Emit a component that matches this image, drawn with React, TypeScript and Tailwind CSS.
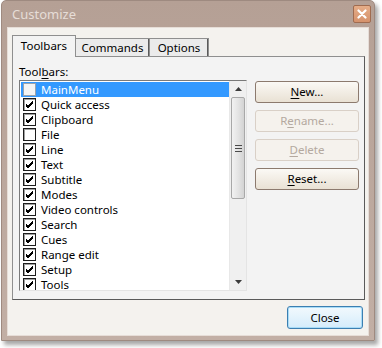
import { Fragment } from 'react';

const rows: [string, boolean][] = [
  ['MainMenu', false],
  ['Quick access', true],
  ['Clipboard', true],
  ['File', false],
  ['Line', true],
  ['Text', true],
  ['Subtitle', true],
  ['Modes', true],
  ['Video controls', true],
  ['Search', true],
  ['Cues', true],
  ['Range edit', true],
  ['Setup', true],
  ['Tools', true],
];

function Check({ on, dim }: { on: boolean; dim?: boolean }) {
  return (
    <span
      className={
        'flex h-[13px] w-[13px] shrink-0 items-center justify-center border ' +
        (dim ? 'border-[#9aa3ad] bg-[#f4f4f4]' : 'border-[#1c1c1c] bg-white shadow-[inset_1px_1px_0_#a0a0a0]')
      }
    >
      {on && (
        <svg width="9" height="9" viewBox="0 0 9 9">
          <path d="M1 4 L3 6 L8 1 M1 5 L3 7 L8 2 M1 6 L3 8 L8 3" stroke="#000" strokeWidth="1" fill="none" />
        </svg>
      )}
    </span>
  );
}

function Btn({ label, u, rest, off }: { label: string; u: string; rest: string; off?: boolean }) {
  return (
    <button
      className={
        'h-[22px] w-[104px] rounded-[3px] border text-center leading-[20px] ' +
        (off
          ? 'border-[#d9d0c7] bg-[#f5f2ed] text-[#b4a99f]'
          : 'border-[#8c7a6e] bg-gradient-to-b from-[#fbf9f5] to-[#e9e1d4] text-black')
      }
    >
      {label}
      <span className="underline underline-offset-2">{u}</span>
      {rest}
    </button>
  );
}

export default function App() {
  return (
    <div className="h-[348px] w-[382px] bg-white pl-[1px] font-['Noto_Sans',sans-serif] text-[11.5px] leading-[15px]">
      <div className="flex h-[341px] w-[374px] flex-col rounded-t-[5px] border border-[#9e8a80] bg-gradient-to-b from-[#b5a095] to-[#c2afa5] shadow-[3px_4px_4px_rgba(0,0,0,0.35)]">
        <div className="flex h-[26px] items-center justify-between pl-[10px] pr-[3px]">
          <span className="text-[13px] text-[#e6ddd7]">Customize</span>
          <span className="flex h-[18px] w-[18px] items-center justify-center rounded-[2px] border border-[#a06c50] bg-gradient-to-b from-[#e6ad88] to-[#d5926c]">
            <svg width="10" height="10" viewBox="0 0 10 10">
              <path d="M1.5 1.5 L8.5 8.5 M8.5 1.5 L1.5 8.5" stroke="#fff" strokeWidth="2.2" strokeLinecap="round" />
            </svg>
          </span>
        </div>
        <div className="mx-[5px] mb-[4px] flex flex-1 flex-col border border-[#e6ddd7] bg-[#f4f2ee] pl-[4px] pt-[7px]">
          <div className="flex h-[22px] items-end">
            <div className="relative z-10 flex h-[22px] w-[64px] items-start justify-center border border-b-0 border-[#8f8f8f] bg-[#f3f3f3] pt-[2px]">
              Toolbars
            </div>
            <div className="flex h-[19px] w-[74px] items-start justify-center border border-b-0 border-l-0 border-[#8f8f8f] bg-[#ebebeb] pt-[1px] shadow-[inset_-1px_0_0_#5a5a5a]">
              Commands
            </div>
            <div className="flex h-[19px] w-[59px] items-start justify-center border border-b-0 border-l-0 border-[#8f8f8f] bg-[#ebebeb] pt-[1px] shadow-[inset_-1px_0_0_#5a5a5a]">
              Options
            </div>
          </div>
          <div className="-mt-[1px] flex h-[244px] w-[353px] border border-[#8f8f8f] border-b-[#5a5a5a] border-r-[#5a5a5a] bg-[#f3f3f3] pl-[6px] pt-[7px]">
            <div className="flex flex-col">
              <div className="h-[15px]">
                Tool<span className="underline underline-offset-2">b</span>ars:
              </div>
              <div className="mt-[1px] flex h-[211px] w-[228px] border border-[#7a7a7a] border-b-[#e4e4e4] border-r-[#e4e4e4] bg-white">
                <div className="flex flex-1 flex-col overflow-hidden pl-[1px] pt-[1px]">
                  {rows.map(([name, on], i) => (
                    <Fragment key={name}>
                      <div
                        className={
                          'flex h-[15px] shrink-0 items-center gap-[5px] pl-[2px] ' +
                          (i === 0 ? 'bg-[#3399ff] text-white' : 'text-black')
                        }
                      >
                        <Check on={on} dim={i === 0} />
                        <span>{name}</span>
                      </div>
                    </Fragment>
                  ))}
                </div>
                <div className="flex w-[17px] flex-col border-l border-[#e8e8e8] bg-[#f0f0f0]">
                  <div className="flex h-[16px] items-center justify-center">
                    <svg width="7" height="4" viewBox="0 0 7 4">
                      <path d="M3.5 0 L7 4 L0 4 Z" fill="#3c3c3c" />
                    </svg>
                  </div>
                  <div className="mx-[1px] flex h-[102px] items-center justify-center rounded-[2px] border border-[#a8a8a8] bg-gradient-to-r from-[#f2f2f2] via-[#e4e4e4] to-[#d3d3d3]">
                    <svg width="7" height="7" viewBox="0 0 7 7">
                      <path d="M0 0.5 H7 M0 3.5 H7 M0 6.5 H7" stroke="#4a4a4a" />
                    </svg>
                  </div>
                  <div className="flex-1" />
                  <div className="flex h-[16px] items-center justify-center">
                    <svg width="7" height="4" viewBox="0 0 7 4">
                      <path d="M0 0 L7 0 L3.5 4 Z" fill="#3c3c3c" />
                    </svg>
                  </div>
                </div>
              </div>
            </div>
            <div className="ml-[8px] mt-[17px] flex flex-col gap-[7px]">
              <Btn label="" u="N" rest="ew..." />
              <Btn label="R" u="e" rest="name..." off />
              <Btn label="" u="D" rest="elete" off />
              <Btn label="" u="R" rest="eset..." />
            </div>
          </div>
          <div className="flex flex-1 items-center justify-end pr-[5px]">
            <button className="h-[23px] w-[76px] rounded-[3px] border border-[#3c7fb1] bg-gradient-to-b from-[#f2f9fd] to-[#d4ecfb] leading-[21px] shadow-[inset_0_0_0_1px_#a8dcf7]">
              Close
            </button>
          </div>
        </div>
      </div>
    </div>
  );
}
